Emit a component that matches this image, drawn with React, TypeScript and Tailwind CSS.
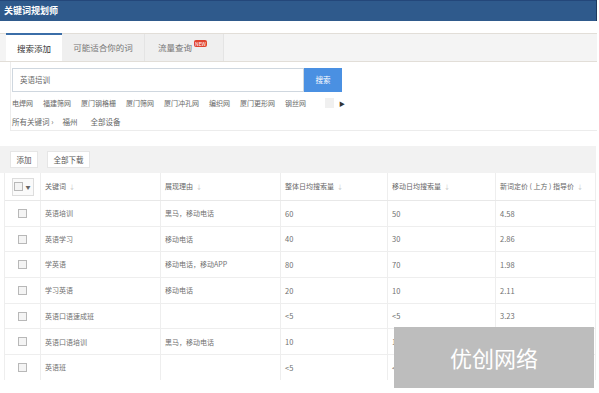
import React from 'react'

const font = { fontFamily: '"Noto Sans CJK SC", "Noto Sans", sans-serif' }

const links = ['电焊网', '福建筛网', '厦门钢格栅', '厦门筛网', '厦门冲孔网', '编织网', '厦门更形网', '钢丝网']

const rows = [
  { kw: '英语培训', reason: '黑马，移动电话', all: '60', mobile: '50', price: '4.58' },
  { kw: '英语学习', reason: '移动电话', all: '40', mobile: '30', price: '2.86' },
  { kw: '学英语', reason: '移动电话，移动APP', all: '80', mobile: '70', price: '1.98' },
  { kw: '学习英语', reason: '移动电话', all: '20', mobile: '10', price: '2.11' },
  { kw: '英语口语速成班', reason: '', all: '<5', mobile: '<5', price: '3.23' },
  { kw: '英语口语培训', reason: '黑马，移动电话', all: '10', mobile: '1', price: '' },
  { kw: '英语班', reason: '', all: '<5', mobile: '<', price: '' },
]

const Checkbox = () => (
  <span className="inline-block h-[9px] w-[9px] border border-[#b8b8b8] bg-[#f4f4f4]" />
)

const SortIcon = () => <span className="ml-[3px] text-[6px] text-[#c4c4c4]">↓</span>

const App = () => {
  return (
    <div className="relative h-[393px] w-[599px] overflow-hidden bg-white text-[#555]" style={font}>
      <div className="w-[597px] border-r border-[#1e3b5e]">
        <div className="flex h-[21px] items-center border-t border-[#24477a] bg-[#2f5a8c] pl-[4px] text-[9px] font-bold text-white">
          关键词规划师
        </div>
      </div>

      <div className="mt-[12px] flex h-[29px] w-[597px] border-y border-[#e2ded8] bg-[#f4f4f4] text-[8.5px]">
        <div className="-mt-px ml-[6px] flex w-[56px] items-center justify-center border-t-2 border-[#3b6ea8] bg-white text-[#333]">
          搜索添加
        </div>
        <div className="flex w-[83px] items-center justify-center border-r border-[#e4e4e4] bg-[#efefef] text-[#777]">
          可能适合你的词
        </div>
        <div className="flex w-[79px] items-center border-r border-[#e4e4e4] bg-[#efefef] pl-[13px] text-[#777]">
          <span>流量查询</span>
          <span className="-mt-[9px] ml-[2px] rounded-[2px] bg-[#e0432f] px-[1px] text-[5px] leading-[7px] text-white">
            NEW
          </span>
        </div>
      </div>

      <div className="ml-[10px] w-[587px] border-b border-l border-[#ececec] pl-px">
        <div className="flex pt-[6px]">
          <div className="flex h-[24px] w-[292px] items-center border border-[#cfd7df] pl-[7px] text-[7.5px] text-[#666]">
            英语培训
          </div>
          <div className="flex h-[24px] w-[38px] items-center justify-center bg-[#4a90e2] text-[7.5px] text-white">
            搜索
          </div>
        </div>
        <div className="mt-[3px] flex h-[16px] items-center text-[7px] text-[#666]">
          {links.map((l) => (
            <span key={l} className="mr-[10px]">
              {l}
            </span>
          ))}
          <span className="ml-[9px] h-[10px] w-[9px] bg-[#f0f0f0]" />
          <span className="ml-[5px] text-[6px] text-[#333]">▶</span>
        </div>
        <div className="flex h-[19px] items-center pt-[2px] text-[7.5px] text-[#666]">
          <span>所有关键词 ›</span>
          <span className="ml-[9px]">福州</span>
          <span className="ml-[13px]">全部设备</span>
        </div>
      </div>

      <div className="mt-[15px] w-[596px]">
        <div className="flex h-[27px] items-center gap-[9px] bg-[#f2f2f2] pl-[10px] text-[7.5px] text-[#555]">
          <span className="flex h-[17px] w-[28px] items-center justify-center border border-[#e6e6e6] bg-white">添加</span>
          <span className="flex h-[17px] w-[43px] items-center justify-center border border-[#e6e6e6] bg-white">全部下载</span>
        </div>

        <div className="ml-[4px] h-[207px] overflow-hidden border-l border-[#eee] text-[7px]">
          <div className="flex h-[28px] border-b border-[#e8e8e8] text-[#666]">
            <div className="flex w-[36px] items-center justify-center border-r border-[#eee]">
              <span className="flex h-[18px] w-[22px] items-center justify-center gap-[2px] border border-[#ddd] bg-[#fafafa]">
                <Checkbox />
                <span className="text-[5px]">▼</span>
              </span>
            </div>
            <div className="flex w-[120px] items-center border-r border-[#eee] pl-[4px]">关键词<SortIcon /></div>
            <div className="flex w-[120px] items-center border-r border-[#eee] pl-[4px]">展现理由<SortIcon /></div>
            <div className="flex w-[107px] items-center border-r border-[#eee] pl-[4px]">整体日均搜索量<SortIcon /></div>
            <div className="flex w-[108px] items-center border-r border-[#eee] pl-[4px]">移动日均搜索量<SortIcon /></div>
            <div className="flex flex-1 items-center whitespace-nowrap border-r border-[#eee] pl-[4px]">新词定价 ( 上方 ) 指导价<SortIcon /></div>
          </div>
          {rows.map((r) => (
            <div key={r.kw} className="flex h-[25.7px] border-b border-[#eee] text-[#707070]">
              <div className="flex w-[36px] items-center justify-center border-r border-[#eee]">
                <Checkbox />
              </div>
              <div className="flex w-[120px] items-center border-r border-[#eee] pl-[4px]">{r.kw}</div>
              <div className="flex w-[120px] items-center border-r border-[#eee] pl-[4px]">{r.reason}</div>
              <div className="flex w-[107px] items-center border-r border-[#eee] pl-[4px] text-[7.5px]">{r.all}</div>
              <div className="flex w-[108px] items-center border-r border-[#eee] pl-[4px] text-[7.5px]">{r.mobile}</div>
              <div className="flex flex-1 items-center border-r border-[#eee] pl-[4px] text-[7.5px]">{r.price}</div>
            </div>
          ))}
        </div>
      </div>

      <div className="absolute left-[394px] top-[327px] flex h-[61px] w-[200px] items-center justify-center bg-[#bdbdbd] text-[22px] text-white">
        优创网络
      </div>
    </div>
  )
}

export default App
